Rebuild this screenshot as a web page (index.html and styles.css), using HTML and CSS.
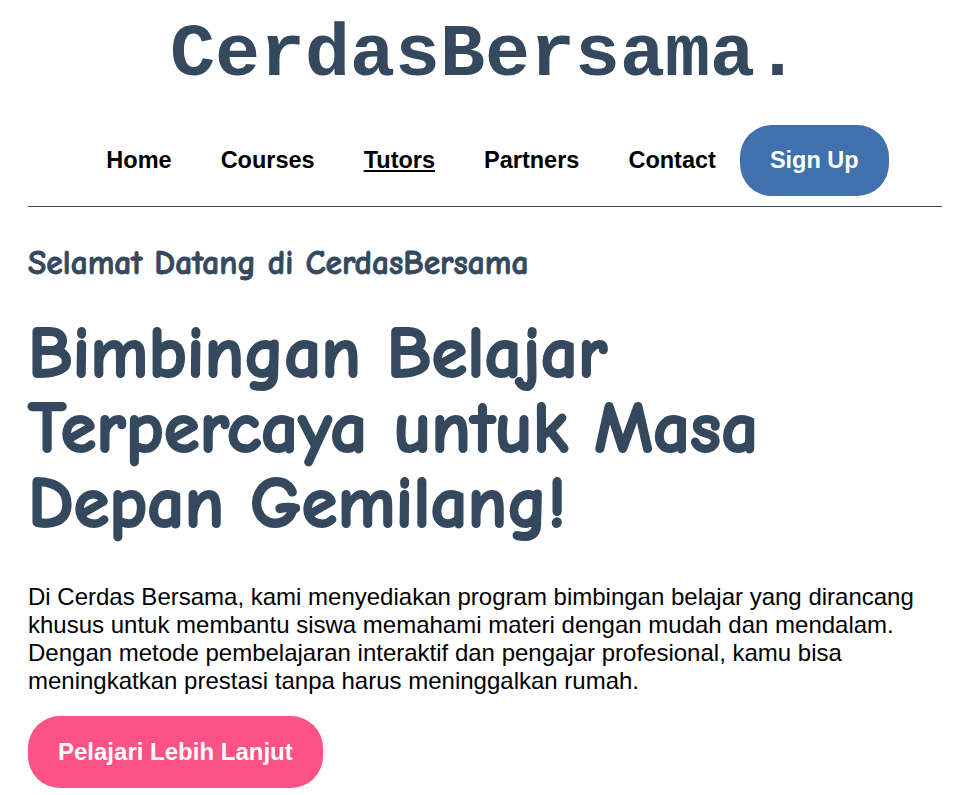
FILE: index.html
```html
<!DOCTYPE html>
<html lang="id">
<head>
<meta charset="utf-8">
<title>CerdasBersama</title>
<link rel="stylesheet" href="styles.css">
</head>
<body>
<div class="page">
  <header class="site-header">
    <h1 class="logo">CerdasBersama.</h1>
    <nav class="nav">
      <a class="nav-link" href="#">Home</a>
      <a class="nav-link" href="#">Courses</a>
      <a class="nav-link active" href="#">Tutors</a>
      <a class="nav-link" href="#">Partners</a>
      <a class="nav-link" href="#">Contact</a>
      <a class="btn btn-signup" href="#">Sign Up</a>
    </nav>
  </header>
  <main class="hero">
    <h3 class="hero-sub">Selamat Datang di CerdasBersama</h3>
    <h2 class="hero-title">Bimbingan Belajar Terpercaya untuk Masa Depan Gemilang!</h2>
    <p class="hero-text">Di Cerdas Bersama, kami menyediakan program bimbingan belajar yang dirancang khusus untuk membantu siswa memahami materi dengan mudah dan mendalam. Dengan metode pembelajaran interaktif dan pengajar profesional, kamu bisa meningkatkan prestasi tanpa harus meninggalkan rumah.</p>
    <a class="btn btn-cta" href="#">Pelajari Lebih Lanjut</a>
  </main>
</div>
</body>
</html>
```
FILE: styles.css
```css
* { box-sizing: border-box; }
body {
  margin: 0;
  font-family: "Liberation Sans", Arial, sans-serif;
  color: #000;
  background: #fff;
}
.page {
  padding: 0 28px;
}
.site-header {
  display: flex;
  flex-direction: column;
  align-items: center;
  border-bottom: 1px solid #34495e;
  padding-bottom: 10px;
}
.logo {
  margin: 15px 0 0;
  font-family: "Liberation Mono", "Courier New", monospace;
  font-size: 75px;
  font-weight: 700;
  color: #34495e;
  line-height: 1.1;
}
.nav {
  display: flex;
  align-items: center;
  margin-top: 27px;
}
.nav-link {
  padding: 0 24px 0 25px;
  font-size: 23.5px;
  font-weight: 700;
  color: #000;
  text-decoration: none;
}
.nav-link.active {
  text-decoration: underline;
}
.btn {
  display: inline-block;
  font-family: "Liberation Sans", Arial, sans-serif;
  font-size: 23.5px;
  line-height: 27px;
  font-weight: 700;
  color: #fff;
  text-decoration: none;
  border-radius: 32px;
}
.btn-signup {
  background: #4070ad;
  padding: 22px 30px;
}
.hero {
  display: flex;
  flex-direction: column;
  align-items: flex-start;
  padding-top: 36px;
}
.hero-sub {
  margin: 0;
  font-family: "Comic Sans MS", "Comic Neue", "Noto Sans", sans-serif;
  font-size: 33.5px;
  line-height: 40px;
  font-weight: 700;
  color: #34495e;
  -webkit-text-stroke: 0.8px #34495e;
}
.hero-title {
  margin: 33px 0 0;
  font-family: "Comic Sans MS", "Comic Neue", "Noto Sans", sans-serif;
  font-size: 73px;
  line-height: 75px;
  font-weight: 700;
  color: #34495e;
  -webkit-text-stroke: 2px #34495e;
  max-width: 820px;
}
.hero-text {
  margin: 42px 0 0;
  font-size: 24px;
  line-height: 28px;
}
.btn-cta {
  margin-top: 21px;
  font-size: 24px;
  line-height: 28px;
  background: #fe5284;
  padding: 22px 30px;
}
```
